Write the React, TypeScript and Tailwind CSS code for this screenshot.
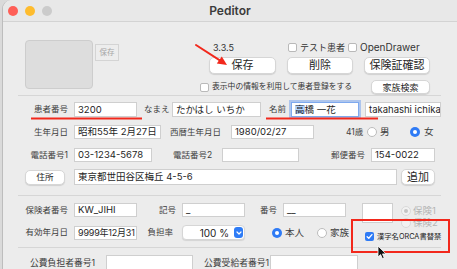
import React from 'react';

// small building blocks for the mac-style form
const Label = ({ className = '', children }: { className?: string; children: React.ReactNode }) => (
  <span className={`text-[8.5px] leading-none text-[#3d3d3d] whitespace-nowrap shrink-0 ${className}`}>{children}</span>
);

const Field = ({ className = '', children }: { className?: string; children?: React.ReactNode }) => (
  <div
    className={`bg-white border border-[#cfcfcf] flex items-center pl-[3px] text-[9.5px] leading-none text-[#1e1e1e] overflow-hidden whitespace-nowrap shrink-0 ${className}`}
  >
    {children}
  </div>
);

const Btn = ({ className = '', children }: { className?: string; children: React.ReactNode }) => (
  <div
    className={`bg-white rounded-[5px] border border-[#d6d6d6] shadow-[0_1px_1px_rgba(0,0,0,0.12)] flex items-center justify-center leading-none text-[#262626] shrink-0 ${className}`}
  >
    {children}
  </div>
);

const Check = ({ checked = false }: { checked?: boolean }) =>
  checked ? (
    <div className="w-[9px] h-[9px] rounded-[2px] bg-[#2f7bf5] flex items-center justify-center shrink-0">
      <svg width="7" height="7" viewBox="0 0 8 8">
        <path d="M1.3 4.2 L3.2 6 L6.8 1.8" fill="none" stroke="white" strokeWidth="1.5" strokeLinecap="round" strokeLinejoin="round" />
      </svg>
    </div>
  ) : (
    <div className="w-[9px] h-[9px] rounded-[2px] bg-white border border-[#b9b9b9] shrink-0" />
  );

const Radio = ({ on = false, disabled = false }: { on?: boolean; disabled?: boolean }) => {
  if (on && !disabled)
    return (
      <div className="w-[10px] h-[10px] rounded-full bg-[#2f7bf5] flex items-center justify-center shrink-0">
        <div className="w-[4px] h-[4px] rounded-full bg-white" />
      </div>
    );
  return (
    <div
      className={`w-[10px] h-[10px] rounded-full flex items-center justify-center shrink-0 border ${
        disabled ? 'bg-[#f2f2f2] border-[#dadada]' : 'bg-white border-[#bcbcbc]'
      }`}
    >
      {on && <div className="w-[4px] h-[4px] rounded-full bg-[#c4c4c4]" />}
    </div>
  );
};

export default function App() {
  return (
    <div className="relative w-[457px] h-[269px] overflow-hidden bg-[#dadada] pl-[2px] font-[family-name:Inter,'Noto_Sans_CJK_JP',sans-serif]">
      <div className="h-full bg-[#ececec] border-l border-[#bdbdbd] rounded-tl-[9px] flex flex-col">
        {/* title bar */}
        <div className="h-[22px] shrink-0 border-b border-[#d3d3d3] bg-[#e8e8e8] rounded-tl-[9px] grid grid-cols-[1fr_auto_1fr] items-center">
          <div className="flex gap-[7px] pl-[5px]">
            <div className="w-[10px] h-[10px] rounded-full bg-[#fe5f57]" />
            <div className="w-[10px] h-[10px] rounded-full bg-[#febc2e]" />
            <div className="w-[10px] h-[10px] rounded-full bg-[#cbcbcb]" />
          </div>
          <span className="text-[12px] font-semibold leading-none text-[#3b3b3b]">Peditor</span>
          <div />
        </div>

        {/* top area */}
        <div className="flex h-[73px] shrink-0">
          <div className="ml-[22px] mt-[18px] w-[68px] h-[49px] rounded-[4px] bg-[#dddddd] border border-[#cdcdcd]" />
          <div className="ml-[2px] mt-[22px] w-[24px] h-[17px] border border-[#d4d4d4] bg-[#ededed] flex items-center justify-center text-[7.5px] leading-none text-[#a6a6a6]">
            保存
          </div>
          <div className="ml-[81px] flex flex-col">
            <div className="mt-[20px] h-[10px] flex items-center">
              <span className="ml-[13px] w-[75px] text-[9px] leading-none text-[#333]">3.3.5</span>
              <Check />
              <span className="ml-[3px] w-[48px] text-[9px] leading-none text-[#333] whitespace-nowrap">テスト患者</span>
              <Check />
              <span className="ml-[3px] text-[10px] leading-none text-[#333]">OpenDrawer</span>
            </div>
            <div className="mt-[5px] h-[17px] flex">
              <Btn className="ml-[9px] w-[67px] h-[17px] text-[11px]">保存</Btn>
              <Btn className="ml-[11px] w-[66px] h-[17px] text-[11px]">削除</Btn>
              <Btn className="ml-[11px] w-[66px] h-[17px] text-[11px]">保険証確認</Btn>
            </div>
            <div className="mt-[6px] h-[14px] flex items-center">
              <Check />
              <span className="ml-[3px] w-[159px] text-[7.8px] leading-none text-[#333] whitespace-nowrap">
                表示中の情報を利用して患者登録をする
              </span>
              <Btn className="w-[59px] h-[14px] text-[9px]">家族検索</Btn>
            </div>
          </div>
        </div>
        <div className="h-px w-[423px] ml-[15px] bg-[#d6d6d6] shrink-0" />

        {/* patient */}
        <div className="h-[99px] shrink-0 flex flex-col pt-[6px]">
          <div className="h-[15px] flex items-center">
            <Label className="w-[65px] text-right">患者番号</Label>
            <Field className="ml-[6px] w-[63px] h-[15px]">3200</Field>
            <Label className="ml-[7px] w-[28px]">なまえ</Label>
            <Field className="w-[89px] h-[15px]">たかはし いちか</Field>
            <Label className="ml-[8px] w-[22px]">名前</Label>
            <Field className="w-[68px] h-[15px] !border-[#7ea9ee] shadow-[0_0_0_2px_rgba(97,150,240,0.45)]">
              <span className="bg-[#b5d3fb]">高</span>橋 一花
            </Field>
            <Field className="ml-[6px] w-[76px] h-[15px]">takahashi ichika</Field>
          </div>

          <div className="mt-[8px] h-[14px] flex items-center">
            <Label className="w-[65px] text-right">生年月日</Label>
            <Field className="ml-[6px] w-[87px] h-[14px]">昭和55年 2月27日</Field>
            <Label className="ml-[9px] w-[61px]">西暦生年月日</Label>
            <Field className="w-[83px] h-[14px]">1980/02/27</Field>
            <Label className="ml-[32px] w-[21px]">41歳</Label>
            <Radio />
            <Label className="ml-[3px] w-[30px] text-[9.5px]">男</Label>
            <Radio on />
            <Label className="ml-[4px] text-[9.5px]">女</Label>
          </div>

          <div className="mt-[9px] h-[14px] flex items-center">
            <Label className="w-[65px] text-right">電話番号1</Label>
            <Field className="ml-[6px] w-[78px] h-[14px]">03-1234-5678</Field>
            <Label className="ml-[21px] w-[49px]">電話番号2</Label>
            <Field className="w-[77px] h-[14px]" />
            <Label className="ml-[32px] w-[40px]">郵便番号</Label>
            <Field className="w-[64px] h-[14px]">154-0022</Field>
          </div>

          <div className="mt-[7px] h-[16px] flex items-center">
            <Btn className="ml-[22px] w-[40px] h-[15px] text-[8.5px]">住所</Btn>
            <Field className="ml-[9px] w-[323px] h-[16px]">東京都世田谷区梅丘 4-5-6</Field>
            <Btn className="ml-[4px] w-[34px] h-[16px] text-[11px]">追加</Btn>
          </div>
        </div>
        <div className="h-px w-[423px] ml-[15px] bg-[#d6d6d6] shrink-0" />

        {/* insurance */}
        <div className="h-[51px] shrink-0 flex items-start pt-[7px]">
          <div className="flex flex-col">
            <div className="h-[14px] flex items-center">
              <Label className="w-[65px] text-right">保険者番号</Label>
              <Field className="ml-[6px] w-[63px] h-[14px]">KW_JIHI</Field>
              <Label className="w-[39px] text-right">記号</Label>
              <Field className="ml-[6px] w-[63px] h-[14px]">_</Field>
              <Label className="w-[32px] text-right">番号</Label>
              <Field className="ml-[6px] w-[63px] h-[14px]">__</Field>
            </div>
            <div className="mt-[8px] h-[15px] flex items-center">
              <Label className="w-[65px] text-right">有効年月日</Label>
              <Field className="ml-[6px] w-[63px] h-[14px] !text-[9px] tracking-[-0.2px]">9999年12月31</Field>
              <Label className="w-[36px] text-right">負担率</Label>
              <div className="ml-[9px] w-[63px] h-[15px] bg-white rounded-[4px] border border-[#d6d6d6] shadow-[0_1px_1px_rgba(0,0,0,0.1)] flex items-center justify-end shrink-0">
                <span className="text-[10px] leading-none text-[#222] mr-[5px]">100 %</span>
                <div className="w-[9px] h-[11px] rounded-[3px] bg-[#2e7cf6] mr-[1px] flex items-center justify-center">
                  <svg width="6" height="4" viewBox="0 0 6 4">
                    <path d="M1 1 L3 3 L5 1" fill="none" stroke="white" strokeWidth="1.2" strokeLinecap="round" strokeLinejoin="round" />
                  </svg>
                </div>
              </div>
              <div className="ml-[27px]">
                <Radio on />
              </div>
              <Label className="ml-[3px] w-[32px] text-[9.5px]">本人</Label>
              <Radio />
              <Label className="ml-[3px] text-[9.5px]">家族</Label>
            </div>
          </div>

          <div className="ml-[13px] flex flex-col">
            <div className="flex">
              <div className="w-[31px] h-[20px] bg-white border border-[#cfcfcf]" />
              <div className="ml-[8px] mt-[2px] flex flex-col">
                <div className="h-[12px] flex items-center">
                  <Radio on disabled />
                  <span className="ml-[2px] text-[9.5px] leading-none text-[#b4b4b4]">保険1</span>
                </div>
                <div className="h-[12px] flex items-center">
                  <Radio disabled />
                  <span className="ml-[2px] text-[9.5px] leading-none text-[#b4b4b4]">保険2</span>
                </div>
              </div>
            </div>
            <div className="mt-[3px] h-[9px] flex items-center">
              <div className="ml-[3px]">
                <Check checked />
              </div>
              <span className="ml-[3px] text-[7.3px] leading-none text-[#222] whitespace-nowrap">漢字名ORCA書替禁</span>
            </div>
          </div>
        </div>
        <div className="h-px w-[423px] ml-[15px] bg-[#d6d6d6] shrink-0" />

        {/* public expense */}
        <div className="pt-[7px] h-[22px] flex items-start">
          <Label className="ml-[27px] w-[76px] mt-[4px] text-[8.8px]">公費負担者番号1</Label>
          <Field className="w-[87px] h-[16px]" />
          <Label className="ml-[11px] w-[66px] mt-[4px] text-[8.8px]">公費受給者番号1</Label>
          <Field className="w-[88px] h-[16px]" />
        </div>
      </div>

      {/* annotations drawn over the screenshot */}
      <svg className="absolute inset-0 pointer-events-none" width="457" height="269" viewBox="0 0 457 269">
        <line x1="196" y1="45" x2="221" y2="61.2" stroke="#f2281c" strokeWidth="2" strokeLinecap="round" />
        <polygon points="227,65 216.8,63.6 221.8,56.4" fill="#f2281c" />
        <rect x="31" y="117.5" width="111" height="2" fill="#f2281c" />
        <rect x="266" y="117.5" width="112" height="2" fill="#f2281c" />
        <rect x="352" y="220" width="97" height="32" fill="none" stroke="#f2281c" strokeWidth="2" />
        <g transform="translate(378,246)">
          <path d="M0 0 L0 11 L2.6 8.6 L4.4 12.6 L6.2 11.8 L4.5 7.9 L8 7.9 Z" fill="#111" stroke="white" strokeWidth="0.8" strokeLinejoin="round" />
        </g>
      </svg>
    </div>
  );
}
